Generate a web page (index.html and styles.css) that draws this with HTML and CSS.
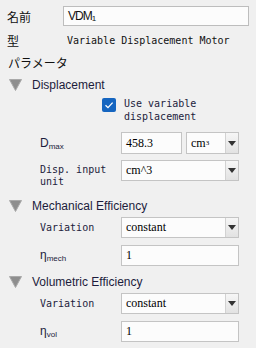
FILE: index.html
```html
<!DOCTYPE html>
<html lang="ja">
<head>
    <meta charset="UTF-8">
    <meta name="viewport" content="width=device-width, initial-scale=1.0">
    <title>Properties</title>
    <link rel="stylesheet" href="styles.css">
</head>
<body>

    <!-- Object properties -->
    <div class="panel">
        <div class="prop-row first">
            <span class="prop-label">名前</span>
            <div class="name-box">VDM<sub>1</sub></div>
        </div>
        <div class="prop-row">
            <span class="prop-label">型</span>
            <span class="type-text mono">Variable Displacement Motor</span>
        </div>

        <div class="params-title">パラメータ</div>

        <!-- Displacement -->
        <div class="group-head">
            <svg class="tri" width="13" height="12" viewBox="0 0 13 12"><polygon points="0.5,0.5 12.5,0.5 6.5,11.5" /></svg>
            <span>Displacement</span>
        </div>
        <div class="check-row">
            <span class="checkbox">
                <svg width="14" height="14" viewBox="0 0 14 14"><path d="M3.5 7.2 L6 9.6 L10.6 4.6" /></svg>
            </span>
            <span class="mono check-text">Use variable<br>displacement</span>
        </div>
        <div class="field field-dmax">
            <span class="field-label">D<sub>max</sub></span>
            <div class="controls">
                <div class="input short">458.3</div>
                <div class="select unit">
                    <span class="select-value">cm<sup>3</sup></span>
                    <span class="drop"></span>
                </div>
            </div>
        </div>
        <div class="field field-unit">
            <span class="field-label mono two-line">Disp. input<br>unit</span>
            <div class="select">
                <span class="select-value">cm^3</span>
                <span class="drop"></span>
            </div>
        </div>

        <!-- Mechanical Efficiency -->
        <div class="group-head next">
            <svg class="tri" width="13" height="12" viewBox="0 0 13 12"><polygon points="0.5,0.5 12.5,0.5 6.5,11.5" /></svg>
            <span>Mechanical Efficiency</span>
        </div>
        <div class="field first-field">
            <span class="field-label mono">Variation</span>
            <div class="select">
                <span class="select-value">constant</span>
                <span class="drop"></span>
            </div>
        </div>
        <div class="field">
            <span class="field-label">&eta;<sub>mech</sub></span>
            <div class="input">1</div>
        </div>

        <!-- Volumetric Efficiency -->
        <div class="group-head last">
            <svg class="tri" width="13" height="12" viewBox="0 0 13 12"><polygon points="0.5,0.5 12.5,0.5 6.5,11.5" /></svg>
            <span>Volumetric Efficiency</span>
        </div>
        <div class="field first-field">
            <span class="field-label mono">Variation</span>
            <div class="select">
                <span class="select-value">constant</span>
                <span class="drop"></span>
            </div>
        </div>
        <div class="field">
            <span class="field-label">&eta;<sub>vol</sub></span>
            <div class="input">1</div>
        </div>
    </div>

</body>
</html>
```

FILE: styles.css
```css
/* General reset */
* {
    margin: 0;
    padding: 0;
    box-sizing: border-box;
}

body {
    background-color: #f0f0f0;
    color: #1a1a2e;
    font-family: "Liberation Sans", Arial, sans-serif;
    font-size: 12px;
}

.panel {
    padding-top: 6px;
}

/* Monospace labels (MS Gothic look) */
.mono {
    font-family: "DejaVu Sans Mono", "Liberation Mono", monospace;
    font-size: 10px;
}

/* Name / type rows */
.prop-row {
    display: flex;
    align-items: center;
    height: 20px;
    margin-top: 4px;
}

.prop-row.first {
    margin-top: 0;
}

.prop-label {
    width: 63px;
    padding-left: 7px;
    font-family: "Noto Sans CJK JP", sans-serif;
    font-size: 12px;
    color: #111;
}

.name-box {
    width: 186px;
    height: 20px;
    border: 1px solid #bdbdbd;
    background-color: #fcfcfc;
    padding-left: 4px;
    line-height: 18px;
    color: #111;
    letter-spacing: -1px;
}

.name-box sub {
    font-size: 8px;
    vertical-align: -1px;
    letter-spacing: 0;
}

.type-text {
    padding-left: 4px;
    color: #111;
}

.params-title {
    height: 20px;
    line-height: 20px;
    margin-top: 3px;
    padding-left: 8px;
    font-family: "Noto Sans CJK JP", sans-serif;
    font-size: 12px;
    color: #111;
}

/* Collapsible group headers */
.group-head {
    display: flex;
    align-items: center;
    gap: 10px;
    height: 20px;
    margin-top: 2px;
    padding-left: 9px;
    color: #1c1c3c;
}

.group-head.next {
    margin-top: 8px;
}

.group-head.last {
    margin-top: 6px;
}

.tri polygon {
    fill: #8e8e8e;
    stroke: #a9a9a9;
    stroke-width: 1;
}

/* Checkbox */
.check-row {
    display: flex;
    align-items: flex-start;
    gap: 8px;
    margin-top: 2px;
    padding-left: 102px;
}

.checkbox {
    display: flex;
    width: 14px;
    height: 14px;
    margin-top: 1px;
    border-radius: 2px;
    background-color: #1565c0;
}

.checkbox path {
    fill: none;
    stroke: #ffffff;
    stroke-width: 1.3;
}

.check-text {
    line-height: 13px;
    color: #1c1c3c;
}

/* Parameter fields */
.field {
    display: flex;
    align-items: center;
    height: 21px;
    margin-top: 7px;
    padding-left: 40px;
    padding-right: 17px;
}

.field.first-field {
    margin-top: 1px;
}

.field-dmax {
    height: 22px;
    margin-top: 9px;
}

.field-unit {
    align-items: flex-start;
    height: auto;
    margin-top: 6px;
}

.field-label {
    width: 81px;
    flex-shrink: 0;
    color: #1c1c3c;
}

.field-label sub {
    font-size: 8px;
    vertical-align: -2px;
}

.two-line {
    line-height: 12px;
    padding-top: 4px;
}

.controls {
    display: flex;
    gap: 4px;
    flex: 1;
    height: 100%;
}

.input, .select {
    flex: 1;
    height: 100%;
    border: 1px solid #c4c4c4;
    background-color: #fcfcfc;
    font-family: "Liberation Serif", "Times New Roman", serif;
    font-size: 12px;
    color: #000;
}

.field-unit .select {
    height: 21px;
}

.input {
    display: flex;
    align-items: center;
    padding-left: 4px;
}

.input.short {
    flex: none;
    width: 61px;
}

.select {
    display: flex;
}

.select.unit {
    flex: none;
    width: 53px;
}

.select-value {
    flex: 1;
    display: flex;
    align-items: center;
    padding-left: 4px;
}

.select-value sup {
    font-size: 7px;
    vertical-align: 6px;
    line-height: 0;
}

.drop {
    display: flex;
    align-items: center;
    justify-content: center;
    width: 13px;
    border-left: 1px solid #d2d2d2;
    background: linear-gradient(#f6f6f6, #e2e2e2);
}

.drop::after {
    content: "";
    border-left: 4px solid transparent;
    border-right: 4px solid transparent;
    border-top: 5px solid #333;
}
```
